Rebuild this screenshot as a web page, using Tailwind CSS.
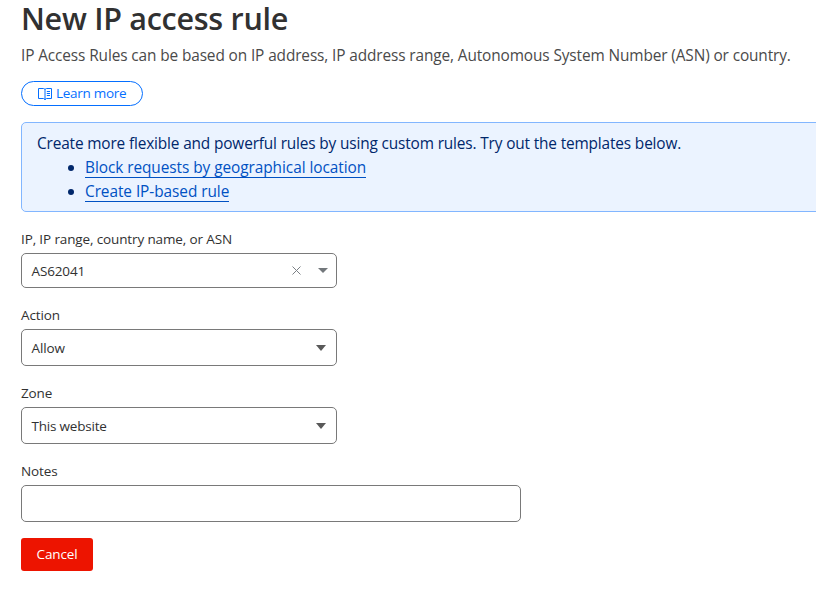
<!DOCTYPE html>
<html lang="en">
<head>
<meta charset="utf-8">
<title>New IP access rule</title>
<script src="https://cdn.jsdelivr.net/npm/@tailwindcss/browser@4"></script>
</head>
<body class="bg-white font-['Open_Sans','Noto_Sans',sans-serif] text-[13.5px] tracking-[-0.13px] text-[#313131] overflow-hidden whitespace-nowrap">
<main class="flex flex-col items-start pl-[21px] h-[591px]">
  <h1 class="h-[39px] leading-[36px] text-[30.5px] tracking-[-0.28px] font-semibold">New IP access rule</h1>
  <p class="mt-[5px] h-[24px] leading-[24px] text-[15.4px] tracking-[-0.115px] text-[#4a4a4a]">IP Access Rules can be based on IP address, IP address range, Autonomous System Number (ASN) or country.</p>
  <a class="mt-[13px] w-[122px] h-[25px] rounded-full border border-[#056fff] text-[#056fff] flex items-center pl-4 leading-[20px]">
    <svg class="w-[14px] h-[14px] mr-[4px] shrink-0" viewBox="0 0 14 14" fill="none" stroke="currentColor" stroke-width="1"><path d="M.5 1.5H5.5L7 2.3L8.5 1.5H13.5V11.5H8.5L7 12.6L5.5 11.5H.5ZM7 2.3V13M8.8 4.5H12M8.8 6.5H12M8.8 8.5H12"/></svg>
    <span class="tracking-[-0.28px] pb-[2px]">Learn more</span>
  </a>
  <section class="mt-4 w-[800px] h-[90px] rounded-[5px] border border-[#82b6ff] bg-[#ebf3ff] pl-[15px] pt-[9px] text-[15.4px] leading-[24px] text-[#00276b]">
    <p class="tracking-[-0.15px]">Create more flexible and powerful rules by using custom rules. Try out the templates below.</p>
    <ul class="text-[#0051c3] tracking-[-0.06px]">
      <li class="flex items-center h-6 pl-[31px]"><i class="size-[6px] rounded-full bg-[#00276b] mr-[11px]"></i><a class="h-[20px] leading-[20px] border-b border-[#0051c3]">Block requests by geographical location</a></li>
      <li class="flex items-center h-6 pl-[31px]"><i class="size-[6px] rounded-full bg-[#00276b] mr-[11px]"></i><a class="h-[20px] leading-[20px] border-b border-[#0051c3]">Create IP-based rule</a></li>
    </ul>
  </section>
  <label class="mt-[17px] h-[20px] leading-[20px]">IP, IP range, country name, or ASN</label>
  <div class="mt-[4px] w-[316px] h-[35px] rounded-[5px] border border-[#797979] flex items-center pl-[9.5px]">
    <span class="pt-[2px]">AS62041</span>
    <svg class="ml-auto w-[9px] h-[9px] mr-[17px] mb-px" viewBox="0 0 9 9" stroke="#7b8085" stroke-width="1"><path d="M.5 .5L8.5 8.5M8.5 .5L.5 8.5"/></svg>
    <svg class="w-[10px] h-[5px] mr-[8px]" viewBox="0 0 10 5" fill="#72777b"><path d="M0 0H10L5 5Z"/></svg>
  </div>
  <label class="mt-[17px] h-[20px] leading-[20px]">Action</label>
  <div class="mt-[4px] w-[316px] h-[37px] rounded-[5px] border border-[#797979] flex items-center pl-[9.5px]">
    <span class="pt-[2px]">Allow</span>
    <svg class="ml-auto w-[10px] h-[6px] mr-[10px]" viewBox="0 0 10 6" fill="#595959"><path d="M0 0H10L5 6Z"/></svg>
  </div>
  <label class="mt-[17px] h-[20px] leading-[20px]">Zone</label>
  <div class="mt-[4px] w-[316px] h-[37px] rounded-[5px] border border-[#797979] flex items-center pl-[9.5px]">
    <span class="pt-[2px] tracking-[-0.2px]">This website</span>
    <svg class="ml-auto w-[10px] h-[6px] mr-[10px]" viewBox="0 0 10 6" fill="#595959"><path d="M0 0H10L5 6Z"/></svg>
  </div>
  <label class="mt-[17px] h-[20px] leading-[20px]">Notes</label>
  <div class="mt-[4px] w-[500px] h-[37px] rounded-[5px] border border-[#797979]"></div>
  <button class="mt-4 w-[72px] h-[33px] pb-[2px] rounded-[3px] bg-[#ed1400] text-white leading-[20px]">Cancel</button>
</main>
</body>
</html>
